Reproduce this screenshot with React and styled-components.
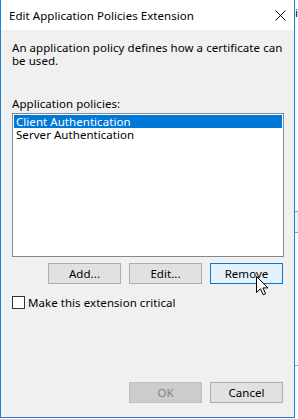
import React from 'react'
import styled, { createGlobalStyle } from 'styled-components'

const GlobalStyle = createGlobalStyle`
    html, body {
        margin: 0;
        padding: 0;
        background: #ffffff;
    }
    body {
        font-family: 'Noto Sans', 'Open Sans', sans-serif;
        font-size: 11.5px;
        letter-spacing: 0.05px;
        color: #000000;
    }
`

const policies = ['Client Authentication', 'Server Authentication']

const ArrowCursor = () => (
    <svg width="13" height="20" viewBox="0 0 13 20">
        <path
            d="M0.5 0.5 L0.5 16.5 L4.5 12.8 L7.2 18.8 L9.6 17.8 L7 11.9 L12 11.9 Z"
            fill="#ffffff"
            stroke="#000000"
            strokeWidth="1"
            strokeLinejoin="miter"
        />
    </svg>
)

const CloseIcon = () => (
    <svg width="11" height="11" viewBox="0 0 11 11">
        <path d="M0.5 0.5 L10.5 10.5 M10.5 0.5 L0.5 10.5" stroke="#000000" strokeWidth="1" />
    </svg>
)

const App = () => (
    <Screen>
        <GlobalStyle />
        <Dialog>
            <TitleBar>
                <Title>Edit Application Policies Extension</Title>
                <CloseButton>
                    <CloseIcon />
                </CloseButton>
            </TitleBar>
            <Body>
                <Description>An application policy defines how a certificate can be used.</Description>
                <Label>Application policies:</Label>
                <ListBox>
                    {policies.map((name, i) => (
                        <ListItem key={name} selected={i === 0}>
                            {name}
                        </ListItem>
                    ))}
                </ListBox>
                <ButtonRow>
                    <Button>Add...</Button>
                    <Button>Edit...</Button>
                    <Button hot>
                        Remove
                        <Cursor>
                            <ArrowCursor />
                        </Cursor>
                    </Button>
                </ButtonRow>
                <CheckRow>
                    <CheckBox />
                    <span>Make this extension critical</span>
                </CheckRow>
                <Footer>
                    <Button disabled>OK</Button>
                    <Button>Cancel</Button>
                </Footer>
            </Body>
        </Dialog>
        <BehindWindow>
            <BehindGlyph>i</BehindGlyph>
            <BehindBand />
            <BehindLine />
        </BehindWindow>
    </Screen>
)

const Screen = styled.div`
    display: flex;
    width: 298px;
    height: 419px;
    overflow: hidden;
`

const Dialog = styled.div`
    width: 295px;
    height: 418px;
    flex: none;
    box-sizing: border-box;
    border: 1px solid #1883d7;
    border-top: none;
    display: flex;
    flex-direction: column;
    background: #f0f0f0;
`

const TitleBar = styled.div`
    height: 30px;
    flex: none;
    background: #ffffff;
    display: flex;
    align-items: center;
    padding-left: 8px;
`

const Title = styled.div`
    flex: 1;
    white-space: nowrap;
`

const CloseButton = styled.div`
    width: 28px;
    height: 30px;
    display: flex;
    align-items: center;
    justify-content: center;
`

const Body = styled.div`
    flex: 1;
    display: flex;
    flex-direction: column;
    padding: 11px 10px 14px 11px;
`

const Description = styled.div`
    line-height: 13px;
    width: 272px;
`

const Label = styled.div`
    margin-top: 30px;
    line-height: 13px;
`

const ListBox = styled.div`
    margin-top: 3px;
    height: 144px;
    box-sizing: border-box;
    border: 1px solid #828790;
    background: #ffffff;
    padding: 1px;
    width: 272px;
`

const ListItem = styled.div`
    height: 13px;
    line-height: 13px;
    padding-left: 2px;
    background: ${p => (p.selected ? '#0078d7' : 'transparent')};
    color: ${p => (p.selected ? '#ffffff' : '#000000')};
`

const ButtonRow = styled.div`
    display: flex;
    justify-content: flex-end;
    gap: 8px;
    width: 271px;
    margin-top: 6px;
`

const Button = styled.div`
    position: relative;
    width: 73px;
    height: 21px;
    box-sizing: border-box;
    display: flex;
    align-items: center;
    justify-content: center;
    border: 1px solid ${p => (p.hot ? '#0078d7' : p.disabled ? '#bfbfbf' : '#adadad')};
    background: ${p => (p.hot ? '#e5f1fb' : p.disabled ? '#cccccc' : '#e1e1e1')};
    color: ${p => (p.disabled ? '#838383' : '#000000')};
`

const Cursor = styled.div`
    position: absolute;
    left: 45px;
    top: 12px;
    line-height: 0;
`

const CheckRow = styled.div`
    margin-top: 12px;
    display: flex;
    align-items: center;
    gap: 3px;
    line-height: 13px;
`

const CheckBox = styled.div`
    width: 13px;
    height: 13px;
    box-sizing: border-box;
    border: 1px solid #333333;
    background: #ffffff;
`

const Footer = styled.div`
    margin-top: auto;
    display: flex;
    justify-content: flex-end;
    gap: 8px;
    width: 271px;
`

const BehindWindow = styled.div`
    flex: 1;
    display: flex;
    flex-direction: column;
    background: #ffffff;
`

const BehindGlyph = styled.div`
    height: 30px;
    padding-top: 6px;
    box-sizing: border-box;
    line-height: 13px;
`

const BehindBand = styled.div`
    margin-top: 181px;
    height: 20px;
    border-top: 1px solid #a0a0a0;
    border-bottom: 1px solid #a0a0a0;
    background: #f0f0f0;
`

const BehindLine = styled.div`
    margin-top: 132px;
    height: 1px;
    background: #a0a0a0;
`

export default App
